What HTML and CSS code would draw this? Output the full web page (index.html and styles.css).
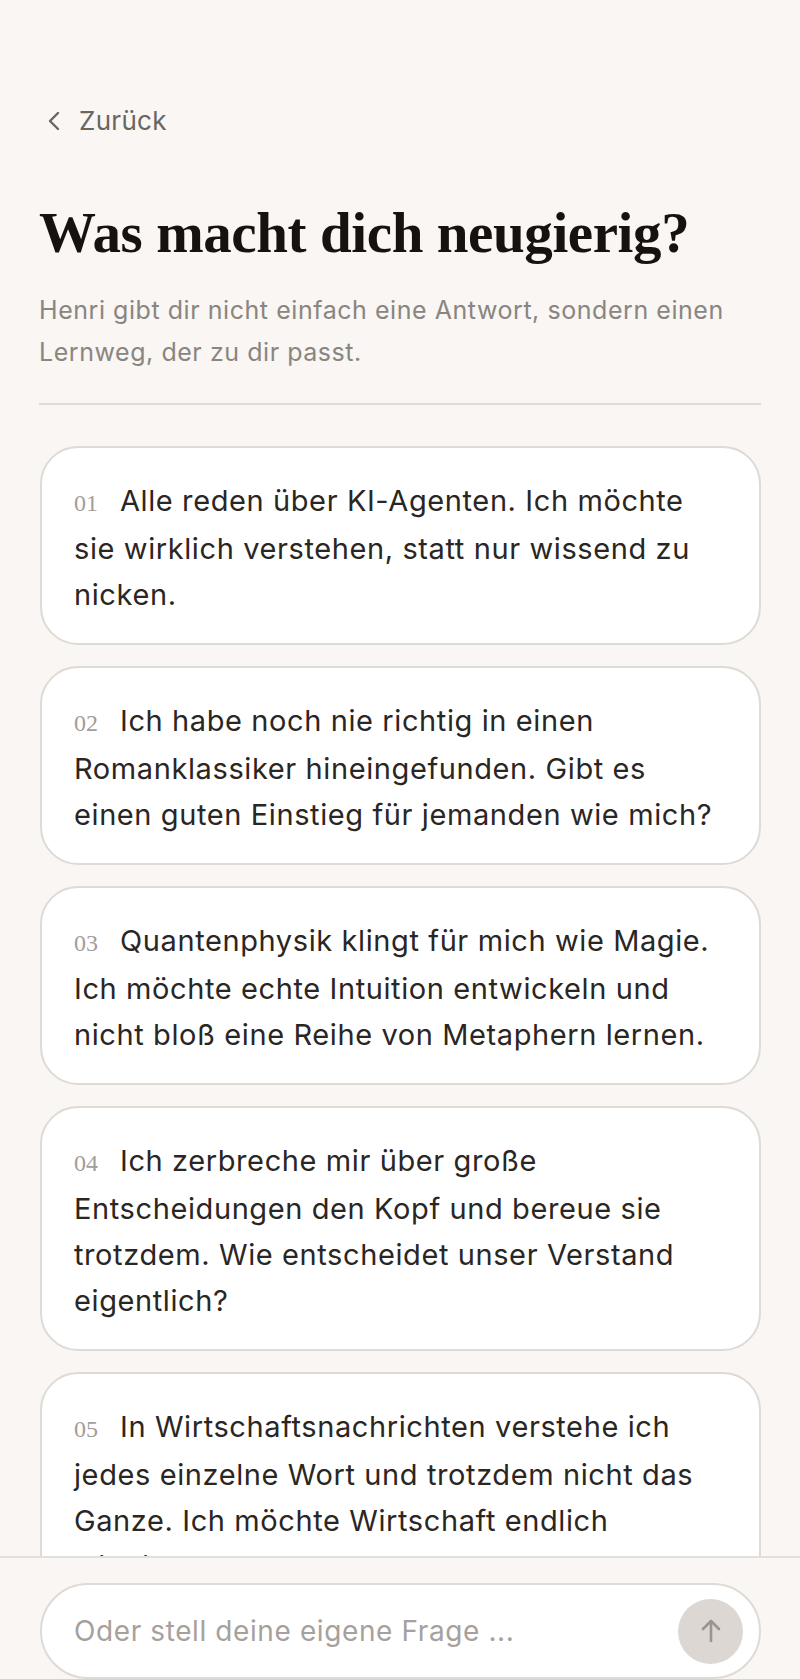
FILE: index.html
```html
<!DOCTYPE html>
<html lang="de">
<head>
  <meta charset="UTF-8">
  <meta name="viewport" content="width=device-width, initial-scale=1.0">
  <title>Was macht dich neugierig?</title>
  <link rel="stylesheet" href="styles.css">
</head>
<body>
  <div class="screen">
    <main class="content">
      <a class="back" href="#">
        <svg width="14" height="20" viewBox="0 0 14 20" aria-hidden="true">
          <path d="M11 2 L3 10 L11 18" fill="none" stroke="currentColor" stroke-width="2.4" stroke-linecap="round" stroke-linejoin="round"/>
        </svg>
        <span>Zurück</span>
      </a>

      <h1>Was macht dich neugierig?</h1>
      <p class="lead">Henri gibt dir nicht einfach eine Antwort, sondern einen Lernweg, der zu dir passt.</p>
      <hr class="divider">

      <ul class="prompts">
        <li class="prompt"><span class="num">01</span><span class="q">Alle reden über KI-Agenten. Ich möchte sie wirklich verstehen, statt nur wissend zu nicken.</span></li>
        <li class="prompt"><span class="num">02</span><span class="q">Ich habe noch nie richtig in einen Romanklassiker hineingefunden. Gibt es einen guten Einstieg für jemanden wie mich?</span></li>
        <li class="prompt"><span class="num">03</span><span class="q">Quantenphysik klingt für mich wie Magie. Ich möchte echte Intuition entwickeln und nicht bloß eine Reihe von Metaphern lernen.</span></li>
        <li class="prompt"><span class="num">04</span><span class="q">Ich zerbreche mir über große Entscheidungen den Kopf und bereue sie trotzdem. Wie entscheidet unser Verstand eigentlich?</span></li>
        <li class="prompt"><span class="num">05</span><span class="q">In Wirtschaftsnachrichten verstehe ich jedes einzelne Wort und trotzdem nicht das Ganze. Ich möchte Wirtschaft endlich wirklich verstehen.</span></li>
      </ul>
    </main>

    <footer class="composer">
      <form class="ask" onsubmit="return false">
        <input type="text" placeholder="Oder stell deine eigene Frage ...">
        <button type="submit" aria-label="Senden">
          <svg width="30" height="30" viewBox="0 0 30 30" aria-hidden="true">
            <path d="M15 25 V6 M7 13 L15 5 L23 13" fill="none" stroke="currentColor" stroke-width="2.6" stroke-linecap="round" stroke-linejoin="round"/>
          </svg>
        </button>
      </form>
    </footer>
  </div>
</body>
</html>
```

FILE: styles.css
```css
html,
body {
  margin: 0;
  padding: 0;
  height: 100%;
}

body {
  font-family: Inter, "Noto Sans", sans-serif;
  background-color: #f9f6f3;
  color: #2a2623;
}

.screen {
  height: 100vh;
  display: flex;
  flex-direction: column;
}

.content {
  flex: 1;
  overflow: hidden;
  padding: 105px 39px 0 39px;
}

.back {
  display: inline-flex;
  align-items: center;
  gap: 18px;
  font-size: 26px;
  letter-spacing: 0.3px;
  color: #6b6560;
  text-decoration: none;
  margin-left: 8px;
}

h1 {
  font-family: "Liberation Serif", "Times New Roman", serif;
  font-weight: 700;
  font-size: 57px;
  letter-spacing: -0.4px;
  line-height: 1.2;
  color: #151210;
  margin: 63px 0 22px;
}

.lead {
  font-size: 25px;
  line-height: 42px;
  letter-spacing: 0.55px;
  color: #8a8580;
  margin: 0;
}

.divider {
  border: none;
  border-top: 2px solid #dedad5;
  margin: 30px 0 41px;
}

.prompts {
  list-style: none;
  margin: 0;
  padding: 0 0 0 1px;
  display: flex;
  flex-direction: column;
  gap: 21px;
}

.prompt {
  background-color: #fff;
  border: 2px solid #dedad5;
  border-radius: 38px;
  padding: 30px 32px 25px;
  font-size: 29px;
  line-height: 46px;
  letter-spacing: 0.6px;
  color: #2a2623;
}

.num {
  font-family: "Liberation Serif", "Times New Roman", serif;
  font-size: 24px;
  letter-spacing: 0;
  color: #a29d98;
  margin-right: 22px;
}

.composer {
  border-top: 2px solid #e3dfda;
  padding: 25px 39px 0 40px;
}

.ask {
  display: flex;
  align-items: center;
  height: 96px;
  box-sizing: border-box;
  background-color: #fff;
  border: 2px solid #dedad5;
  border-radius: 48px;
  padding: 0 16px 0 32px;
}

.ask input {
  flex: 1;
  border: none;
  outline: none;
  background: transparent;
  font-family: Inter, "Noto Sans", sans-serif;
  font-size: 28px;
  letter-spacing: 0.6px;
  color: #2a2623;
  padding: 0;
}

.ask input::placeholder {
  color: #a6a19c;
}

.ask button {
  width: 65px;
  height: 65px;
  border-radius: 50%;
  border: none;
  background-color: #dcd7d2;
  color: #9b958f;
  display: flex;
  align-items: center;
  justify-content: center;
  padding: 0;
  cursor: pointer;
}
```
